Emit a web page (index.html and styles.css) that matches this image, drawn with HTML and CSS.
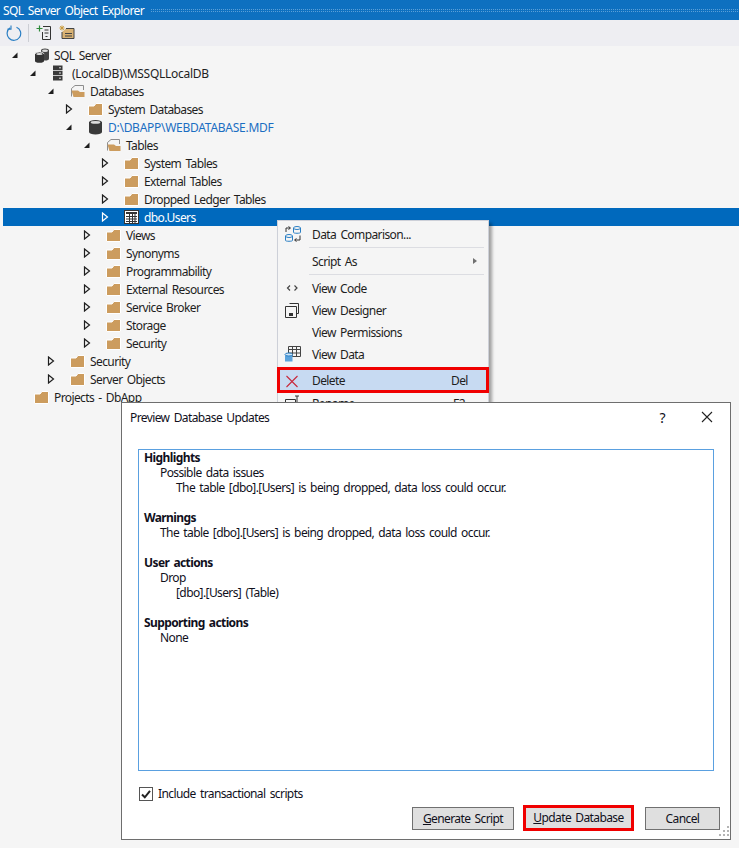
FILE: index.html
```html
<!DOCTYPE html>
<html lang="en">
<head>
<meta charset="utf-8">
<title>SQL Server Object Explorer</title>
<link rel="stylesheet" href="styles.css">
</head>
<body>
<svg class="defs" width="0" height="0" aria-hidden="true">
  <symbol id="exp" viewBox="0 0 10 10"><polygon points="2,8 7.500,8 7.500,2.500" fill="#1e1e1e"/></symbol>
  <symbol id="col" viewBox="0 0 10 10"><polygon points="2.500,1 7.500,5 2.500,9" fill="none" stroke="#1e1e1e" stroke-width="1.200"/></symbol>
  <symbol id="col-w" viewBox="0 0 10 10"><polygon points="2.500,1 7.500,5 2.500,9" fill="none" stroke="#fff" stroke-width="1.200"/></symbol>
  <symbol id="folder" viewBox="0 0 16 16"><path d="M.5 5H6L8 2.500h6.500V14.500H.5z" fill="#cc9c5e" stroke="#fff"/></symbol>
  <symbol id="folder-open" viewBox="0 0 16 16"><path d="M1.500 13.500V5.500L5 2.500h8.500V7" fill="none" stroke="#8d8d8d"/><path d="M1.500 7.500h6.500l2 1.500h4.500v5H3.500z" fill="#cc9c5e"/></symbol>
  <symbol id="servers" viewBox="0 0 16 16"><ellipse cx="11" cy="3.500" rx="4" ry="2" fill="#444"/><rect x="7" y="3.500" width="8" height="8" fill="#444"/><ellipse cx="11" cy="11.500" rx="4" ry="2" fill="#444"/><ellipse cx="11" cy="3.700" rx="3" ry="1.200" fill="#ddd"/><ellipse cx="5.500" cy="7" rx="4.500" ry="2" fill="#333" stroke="#f5f5f5" stroke-width=".8"/><rect x="1" y="7" width="9" height="7" fill="#333"/><ellipse cx="5.500" cy="14" rx="4.500" ry="1.800" fill="#333"/><ellipse cx="5.500" cy="7" rx="3.200" ry="1.100" fill="#ddd"/></symbol>
  <symbol id="server" viewBox="0 0 16 16"><path d="M1 0.500h9.500v4.500H1zM1 5.800h9.500v4.500H1zM1 11h9.500v4.500H1z" fill="#3a3a3a"/><path d="M7 2.800h2M7 8h2M7 13.200h2" stroke="#ddd"/></symbol>
  <symbol id="db" viewBox="0 0 16 16"><rect x="1" y="3" width="13" height="10" fill="#3a3a3a"/><ellipse cx="7.500" cy="13" rx="6.500" ry="2.400" fill="#3a3a3a"/><ellipse cx="7.500" cy="3.400" rx="6.500" ry="2.400" fill="#3a3a3a"/><ellipse cx="7.500" cy="3.400" rx="4.800" ry="1.300" fill="#ddd"/></symbol>
  <symbol id="table" viewBox="0 0 16 16"><rect x=".5" y="1.500" width="14" height="13" fill="#fff" stroke="#333"/><path d="M2 3h11v2H2z" fill="#333"/><path d="M2 7.500h11M2 10h11M2 12.500h11M5.500 5v9M8.500 5v9M11 5v9" stroke="#333"/></symbol>
</svg>

<header class="titlebar">
  <span class="titlebar-text">SQL Server Object Explorer</span>
  <span class="titlebar-grip"></span>
</header>

<div class="toolbar">
  <svg class="tool tool-refresh" width="16" height="16" viewBox="0 0 16 16"><path d="M4.200 2.800A6.800 6.800 0 1 0 10.500 2.200" fill="none" stroke="#2a7fc4" stroke-width="1.200"/><path d="M5 0.500v3.600H1.500" fill="none" stroke="#2a7fc4" stroke-width="1.100"/></svg>
  <span class="tool-sep"></span>
  <svg class="tool tool-add" width="16" height="16" viewBox="0 0 16 16"><path d="M3.500 0.500v6M0.500 3.500h6" stroke="#2f8a3a" stroke-width="1.200"/><path d="M7 1.500h7.500v13h-8V7" fill="none" stroke="#333"/><path d="M8.500 5h4M8.500 8h4M9.500 11.500h2" stroke="#333"/></svg>
  <svg class="tool tool-query" width="17" height="16" viewBox="0 0 17 16"><path d="M4 0.500v5M1.500 3h5M2.200 1.200l3.600 3.600M5.800 1.200L2.200 4.800" stroke="#c99a3b"/><path d="M8 3.500h8v10H4V7" fill="#d9b274" stroke="#444"/><path d="M7 8.500h7M7 11h7" stroke="#444"/></svg>
</div>

<ul class="tree">
  <li class="row lvl-0"><svg class="arrow"><use href="#exp"/></svg><svg class="icon"><use href="#servers"/></svg><span>SQL Server</span></li>
  <li class="row lvl-1"><svg class="arrow"><use href="#exp"/></svg><svg class="icon"><use href="#server"/></svg><span class="caps">(LocalDB)\MSSQLLocalDB</span></li>
  <li class="row lvl-2"><svg class="arrow"><use href="#exp"/></svg><svg class="icon"><use href="#folder-open"/></svg><span>Databases</span></li>
  <li class="row lvl-3"><svg class="arrow"><use href="#col"/></svg><svg class="icon"><use href="#folder"/></svg><span>System Databases</span></li>
  <li class="row lvl-3"><svg class="arrow"><use href="#exp"/></svg><svg class="icon"><use href="#db"/></svg><span class="caps link">D:\DBAPP\WEBDATABASE.MDF</span></li>
  <li class="row lvl-4"><svg class="arrow"><use href="#exp"/></svg><svg class="icon"><use href="#folder-open"/></svg><span>Tables</span></li>
  <li class="row lvl-5"><svg class="arrow"><use href="#col"/></svg><svg class="icon"><use href="#folder"/></svg><span>System Tables</span></li>
  <li class="row lvl-5"><svg class="arrow"><use href="#col"/></svg><svg class="icon"><use href="#folder"/></svg><span>External Tables</span></li>
  <li class="row lvl-5"><svg class="arrow"><use href="#col"/></svg><svg class="icon"><use href="#folder"/></svg><span>Dropped Ledger Tables</span></li>
  <li class="row lvl-5 selected"><svg class="arrow"><use href="#col-w"/></svg><svg class="icon"><use href="#table"/></svg><span>dbo.Users</span></li>
  <li class="row lvl-4"><svg class="arrow"><use href="#col"/></svg><svg class="icon"><use href="#folder"/></svg><span>Views</span></li>
  <li class="row lvl-4"><svg class="arrow"><use href="#col"/></svg><svg class="icon"><use href="#folder"/></svg><span>Synonyms</span></li>
  <li class="row lvl-4"><svg class="arrow"><use href="#col"/></svg><svg class="icon"><use href="#folder"/></svg><span>Programmability</span></li>
  <li class="row lvl-4"><svg class="arrow"><use href="#col"/></svg><svg class="icon"><use href="#folder"/></svg><span>External Resources</span></li>
  <li class="row lvl-4"><svg class="arrow"><use href="#col"/></svg><svg class="icon"><use href="#folder"/></svg><span>Service Broker</span></li>
  <li class="row lvl-4"><svg class="arrow"><use href="#col"/></svg><svg class="icon"><use href="#folder"/></svg><span>Storage</span></li>
  <li class="row lvl-4"><svg class="arrow"><use href="#col"/></svg><svg class="icon"><use href="#folder"/></svg><span>Security</span></li>
  <li class="row lvl-2"><svg class="arrow"><use href="#col"/></svg><svg class="icon"><use href="#folder"/></svg><span>Security</span></li>
  <li class="row lvl-2"><svg class="arrow"><use href="#col"/></svg><svg class="icon"><use href="#folder"/></svg><span>Server Objects</span></li>
  <li class="row lvl-0"><span class="arrow"></span><svg class="icon"><use href="#folder"/></svg><span>Projects - DbApp</span></li>
</ul>

<nav class="menu">
  <div class="item">
    <svg class="item-icon" viewBox="0 0 18 18"><g fill="none" stroke="#2a7fc4"><ellipse cx="13" cy="3" rx="3.500" ry="1.500"/><path d="M9.500 3v4.500c0 1 7 1 7 0V3"/><ellipse cx="5" cy="11" rx="3.500" ry="1.500"/><path d="M1.500 11v4.500c0 1 7 1 7 0V11"/></g><path d="M2 7V3h4M4.500 1.500L6.500 3l-2 1.500M16 10.500V15h-5M12.500 13.500L10.500 15l2 1.500" fill="none" stroke="#333"/></svg>
    <span class="item-label">Data Comparison...</span>
  </div>
  <div class="menu-sep"></div>
  <div class="item">
    <span class="item-icon"></span>
    <span class="item-label">Script As</span>
    <span class="submenu-arrow"></span>
  </div>
  <div class="menu-sep"></div>
  <div class="item">
    <svg class="item-icon" viewBox="0 0 18 18"><path d="M6 6.500L3.500 9 6 11.500M10.500 6.500L13 9l-2.500 2.500" fill="none" stroke="#444" stroke-width="1.200"/></svg>
    <span class="item-label">View Code</span>
  </div>
  <div class="item">
    <svg class="item-icon" viewBox="0 0 18 18"><path d="M5.500 2.500h9v10h-2M1.500 5.500h11v11h-11z" fill="none" stroke="#333"/><path d="M5 12h4v3H5z" fill="#333"/></svg>
    <span class="item-label">View Designer</span>
  </div>
  <div class="item">
    <span class="item-icon"></span>
    <span class="item-label">View Permissions</span>
  </div>
  <div class="item">
    <svg class="item-icon" viewBox="0 0 18 18"><path d="M4.500 1.500h12v10h-12zM4.500 4.500h12M8.500 1.500v10M12.500 1.500v10M4.500 8h12" fill="none" stroke="#444"/><path d="M1 9.500h7.500v7H1z" fill="#5ba3dc"/><ellipse cx="4.750" cy="9.500" rx="3.750" ry="1.500" fill="#cfe4f5" stroke="#2a7fc4"/></svg>
    <span class="item-label">View Data</span>
  </div>
  <div class="item item-delete">
    <svg class="item-icon" viewBox="0 0 18 18"><path d="M2.500 4l11 11M13.500 4l-11 11" stroke="#c8283c" stroke-width="1.100"/></svg>
    <span class="item-label">Delete</span>
    <span class="shortcut">Del</span>
  </div>
  <div class="item">
    <svg class="item-icon" viewBox="0 0 18 18"><path d="M1.500 5.500h10v6h-10zM13 2v12M11 2h4" fill="none" stroke="#333"/></svg>
    <span class="item-label">Rename</span>
    <span class="shortcut">F2</span>
  </div>
</nav>

<section class="dialog">
  <div class="dialog-head">
    <h1 class="dialog-title">Preview Database Updates</h1>
    <span class="help">?</span>
    <svg class="close" width="12" height="12" viewBox="0 0 12 12"><path d="M1 1l10 10M11 1L1 11" stroke="#222" stroke-width="1.100"/></svg>
  </div>
  <div class="report">
    <div class="report-group">
      <p class="strong">Highlights</p>
      <p class="ind-1">Possible data issues</p>
      <p class="ind-2">The table [dbo].[Users] is being dropped, data loss could occur.</p>
    </div>
    <div class="report-group">
      <p class="strong">Warnings</p>
      <p class="ind-1">The table [dbo].[Users] is being dropped, data loss could occur.</p>
    </div>
    <div class="report-group">
      <p class="strong">User actions</p>
      <p class="ind-1">Drop</p>
      <p class="ind-2">[dbo].[Users] (Table)</p>
    </div>
    <div class="report-group">
      <p class="strong">Supporting actions</p>
      <p class="ind-1">None</p>
    </div>
  </div>
  <label class="check-row">
    <svg class="check" width="14" height="14" viewBox="0 0 14 14"><rect x=".5" y=".5" width="13" height="13" fill="#fff" stroke="#555"/><path d="M3 7.500l2.800 2.800L11 3.800" fill="none" stroke="#222" stroke-width="2"/></svg>
    <span>Include transactional scripts</span>
  </label>
  <div class="actions">
    <button class="btn btn-generate"><u>G</u>enerate Script</button>
    <button class="btn btn-update"><u>U</u>pdate Database</button>
    <button class="btn btn-cancel">Cancel</button>
  </div>
  <svg class="grip" width="12" height="12" viewBox="0 0 12 12"><path d="M10 0h2v2h-2zM6 4h2v2H6zM10 4h2v2h-2zM2 8h2v2H2zM6 8h2v2H6zM10 8h2v2h-2z" fill="#b4b4b4"/></svg>
</section>
</body>
</html>
```

FILE: styles.css
```css
* { box-sizing: border-box; }

html, body {
  margin: 0;
  height: 848px;
  overflow: hidden;
}

body {
  position: relative;
  background: #f5f5f5;
  color: #1e1e1e;
  font: 12px/15px "Noto Sans", sans-serif;
  letter-spacing: -0.6px;
  word-spacing: 1.7px;
}

.defs { position: absolute; }

.titlebar {
  display: flex;
  align-items: center;
  height: 20px;
  padding-left: 3px;
  background: #0e70c0;
  color: #fff;
}

.titlebar-text { white-space: nowrap; }

.titlebar-grip {
  flex: 1;
  height: 5px;
  margin-left: 7px;
  background-image:
    linear-gradient(45deg, #5b9fd8 25%, transparent 25%, transparent 75%, #5b9fd8 75%);
  background-size: 2px 2px;
}

.toolbar {
  display: flex;
  align-items: center;
  height: 26px;
  padding-left: 6px;
  background: #eeeef2;
}

.tool-sep {
  width: 1px;
  height: 18px;
  margin: 0 7px 0 6px;
  background: #ccced4;
}

.tool-add { margin-right: 6px; }

.tree {
  list-style: none;
  margin: 0 0 0 3px;
  padding: 0;
}

.row {
  display: flex;
  align-items: center;
  height: 18px;
  white-space: nowrap;
}

.lvl-0 { padding-left: 7px; }
.lvl-1 { padding-left: 25px; }
.lvl-2 { padding-left: 43px; }
.lvl-3 { padding-left: 61px; }
.lvl-4 { padding-left: 79px; }
.lvl-5 { padding-left: 97px; }

.arrow {
  flex: none;
  width: 10px;
  height: 10px;
  margin-right: 14px;
}

.icon {
  flex: none;
  width: 16px;
  height: 16px;
  margin-right: 4px;
}

.caps { letter-spacing: -0.27px; }

.link { color: #1b6ec2; }

.selected {
  background: #0069bd;
  color: #fff;
}

.menu {
  position: absolute;
  left: 277px;
  top: 220px;
  width: 212px;
  height: 220px;
  padding: 2px 1px 0;
  background: #f5f5f5;
  border: 1px solid #cdd0d8;
  box-shadow: 3px 3px 3px rgba(0, 0, 0, .35);
}

.item {
  display: flex;
  align-items: center;
  height: 22px;
  padding-left: 5px;
  white-space: nowrap;
}

.item-icon {
  flex: none;
  width: 18px;
  height: 18px;
  margin-right: 10px;
}

.item-label { flex: 1; }

.shortcut { width: 34px; }

.submenu-arrow {
  width: 0;
  height: 0;
  margin-right: 10px;
  border-left: 4px solid #707070;
  border-top: 3.500px solid transparent;
  border-bottom: 3.500px solid transparent;
}

.menu-sep {
  height: 1px;
  margin: 2px 3px 2px 30px;
  background: #dcdde2;
}

.item-delete {
  height: 26px;
  margin: 2px -2px -1px;
  padding: 1px 0 0 4px;
  background: #c7daf2;
  border: 3px solid #f00000;
}

.item-delete .shortcut { width: 35px; }

.dialog {
  position: absolute;
  left: 121px;
  top: 402px;
  width: 610px;
  height: 438px;
  display: flex;
  flex-direction: column;
  background: #fff;
  border: 1px solid #6e6e6e;
  color: #10101c;
}

.dialog-head {
  display: flex;
  align-items: center;
  height: 28px;
  margin-bottom: 18px;
  padding: 0 17px 0 8px;
}

.dialog-title {
  flex: 1;
  margin: 0;
  font-size: 12px;
  font-weight: 400;
}

.help {
  margin-right: 36px;
  font-size: 14px;
}

.report {
  height: 322px;
  margin: 0 16px;
  padding: 0 5px;
  border: 1px solid #5aa0e0;
}

.report-group { margin-bottom: 15px; }

.report p { margin: 0; white-space: nowrap; }

.strong { font-weight: 700; }
.ind-1 { padding-left: 16px; }
.ind-2 { padding-left: 32px; }

.check-row {
  display: flex;
  align-items: center;
  margin: 15px 0 0 17px;
}

.check { margin-right: 5px; }

.actions {
  display: flex;
  margin: 6px 0 0 290px;
}

.btn {
  height: 23px;
  padding: 0 0 1px;
  background: #dfdfdf;
  border: 1px solid #707070;
  color: inherit;
  font: inherit;
  letter-spacing: inherit;
  word-spacing: inherit;
}

.btn-generate { width: 102px; margin-right: 9px; }

.btn-update {
  width: 111px;
  height: 26px;
  margin: -2px 11px 0 0;
  border: 3px solid #f00000;
}

.btn-cancel { width: 75px; }

.grip {
  position: absolute;
  right: 1px;
  bottom: 1px;
}
```
